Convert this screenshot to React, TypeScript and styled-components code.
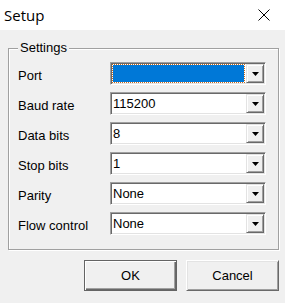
import styled, { createGlobalStyle } from "styled-components";

const GlobalStyle = createGlobalStyle`
  html, body {
    margin: 0;
    padding: 0;
    background: #f0f0f0;
  }
  * {
    box-sizing: border-box;
  }
`;

const Window = styled.div`
  width: 285px;
  height: 303px;
  overflow: hidden;
  background: #f0f0f0;
  font-family: "Liberation Sans", Arial, sans-serif;
  font-size: 13px;
  color: #000;
`;

const TitleBar = styled.div`
  height: 30px;
  background: #fff;
  display: flex;
  align-items: center;
  justify-content: space-between;
  padding: 0 15px 0 4px;
`;

const Title = styled.div`
  font-family: "Open Sans", "Noto Sans", sans-serif;
  font-size: 15px;
  line-height: 30px;
  margin-top: -1px;
`;

const CloseIcon = styled.svg`
  display: block;
  width: 12px;
  height: 12px;
  margin-top: -1px;
`;

const Body = styled.div`
  padding: 11px 6px 0 8px;
`;

const GroupBox = styled.fieldset`
  margin: 0;
  padding: 7px 11px 14px 9px;
  border: 1px solid #a0a0a0;
  box-shadow: inset 1px 1px 0 #fff, 1px 1px 0 #fff;
  display: flex;
  flex-direction: column;
  gap: 7px;
  min-width: 0;
`;

const Caption = styled.legend`
  padding: 0 2px;
  margin-left: 0;
  line-height: 14px;
  background: #f0f0f0;
`;

const Row = styled.div`
  display: grid;
  grid-template-columns: 92px 156px;
  align-items: center;
  height: 23px;
`;

const Label = styled.label`
  padding-top: 4px;
  white-space: nowrap;
`;

const ComboField = styled.div`
  height: 23px;
  display: flex;
  background: #fff;
  border: 1px solid;
  border-color: #a0a0a0 #fff #fff #a0a0a0;
  box-shadow: inset 1px 1px 0 #696969, inset -1px -1px 0 #e3e3e3;
  padding: 1px;
`;

const ComboText = styled.div<{ $focused?: boolean }>`
  flex: 1;
  margin: ${(p) => (p.$focused ? "1px 2px 1px 1px" : "0")};
  padding: 0 1px;
  line-height: ${(p) => (p.$focused ? "17px" : "19px")};
  background: ${(p) => (p.$focused ? "#0078d7" : "transparent")};
  outline: ${(p) => (p.$focused ? "1px dotted #c86a1a" : "none")};
  color: ${(p) => (p.$focused ? "#fff" : "#000")};
  white-space: nowrap;
  overflow: hidden;
`;

const DropButton = styled.div`
  width: 18px;
  display: flex;
  align-items: center;
  justify-content: center;
  background: #f0f0f0;
  border: 1px solid;
  border-color: #e3e3e3 #696969 #696969 #e3e3e3;
  box-shadow: inset 1px 1px 0 #fff, inset -1px -1px 0 #a0a0a0;
`;

const Arrow = styled.svg`
  display: block;
  width: 7px;
  height: 4px;
`;

const ButtonRow = styled.div`
  display: flex;
  justify-content: flex-end;
  gap: 9px;
  margin-top: 10px;
  padding-right: 0;
`;

const DialogButton = styled.button<{ $default?: boolean }>`
  width: 93px;
  height: 31px;
  padding: 0;
  font-family: "Liberation Sans", Arial, sans-serif;
  font-size: 13px;
  color: #000;
  background: #f0f0f0;
  border: 1px solid;
  border-color: ${(p) =>
    p.$default ? "#646464" : "#fff #696969 #696969 #fff"};
  box-shadow: ${(p) =>
    p.$default
      ? "inset 1px 1px 0 #fff, inset -1px -1px 0 #696969, inset -2px -2px 0 #a0a0a0"
      : "inset 1px 1px 0 #e3e3e3, inset -1px -1px 0 #a0a0a0"};
`;

type ComboProps = { value: string; focused?: boolean };

function Combo({ value, focused }: ComboProps) {
  return (
    <ComboField>
      <ComboText $focused={focused}>{value}</ComboText>
      <DropButton>
        <Arrow viewBox="0 0 7 4">
          <polygon points="0,0 7,0 3.5,4" fill="#000" />
        </Arrow>
      </DropButton>
    </ComboField>
  );
}

const settings = [
  { label: "Port", value: "", focused: true },
  { label: "Baud rate", value: "115200" },
  { label: "Data bits", value: "8" },
  { label: "Stop bits", value: "1" },
  { label: "Parity", value: "None" },
  { label: "Flow control", value: "None" },
];

export default function App() {
  return (
    <>
      <GlobalStyle />
      <Window>
        <TitleBar>
          <Title>Setup</Title>
          <CloseIcon viewBox="0 0 12 12">
            <path d="M0.5 0.5 L11.5 11.5 M11.5 0.5 L0.5 11.5" stroke="#000" strokeWidth="1" />
          </CloseIcon>
        </TitleBar>
        <Body>
          <GroupBox>
            <Caption>Settings</Caption>
            {settings.map((s) => (
              <Row key={s.label}>
                <Label>{s.label}</Label>
                <Combo value={s.value} focused={s.focused} />
              </Row>
            ))}
          </GroupBox>
          <ButtonRow>
            <DialogButton $default>OK</DialogButton>
            <DialogButton>Cancel</DialogButton>
          </ButtonRow>
        </Body>
      </Window>
    </>
  );
}
